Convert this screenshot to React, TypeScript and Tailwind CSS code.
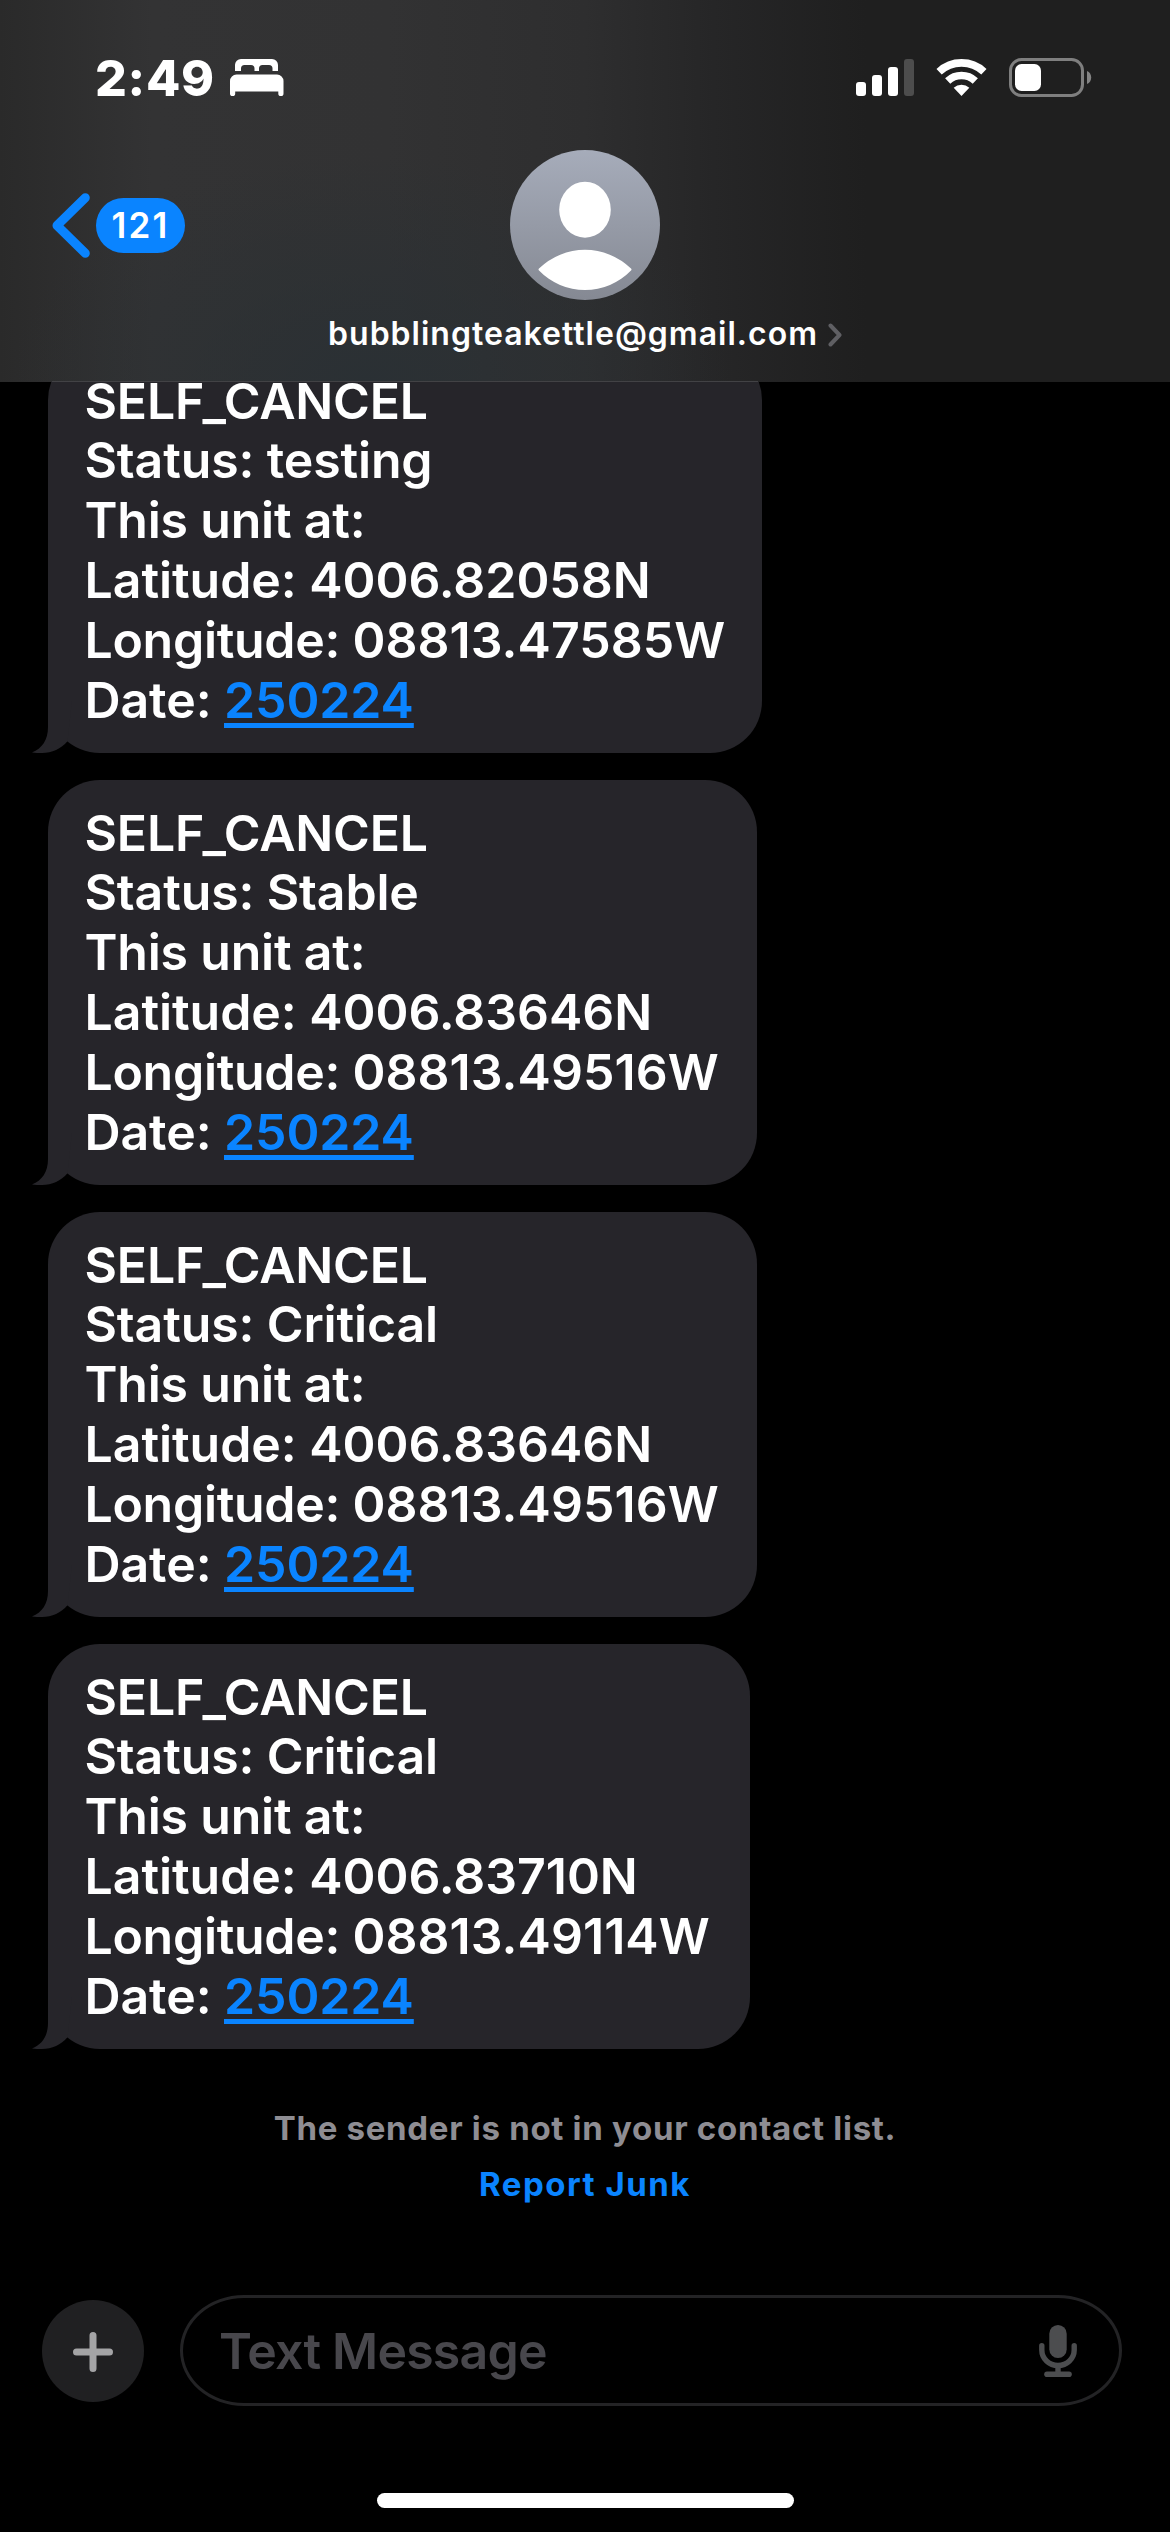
import clsx from 'clsx';

type Message = {
  id: number;
  status: string;
  latitude: string;
  longitude: string;
  date: string;
  width: string;
};

const messages: Message[] = [
  {
    id: 1,
    status: 'testing',
    latitude: '4006.82058N',
    longitude: '08813.47585W',
    date: '250224',
    width: 'w-[714px]',
  },
  {
    id: 2,
    status: 'Stable',
    latitude: '4006.83646N',
    longitude: '08813.49516W',
    date: '250224',
    width: 'w-[709px]',
  },
  {
    id: 3,
    status: 'Critical',
    latitude: '4006.83646N',
    longitude: '08813.49516W',
    date: '250224',
    width: 'w-[709px]',
  },
  {
    id: 4,
    status: 'Critical',
    latitude: '4006.83710N',
    longitude: '08813.49114W',
    date: '250224',
    width: 'w-[702px]',
  },
];

const BedIcon = () => (
  <svg width="54" height="38" viewBox="0 0 54 38" fill="currentColor">
    <path d="M5 12V6a6 6 0 0 1 6-6h31a6 6 0 0 1 6 6v6h-5.5V9.5A3.5 3.5 0 0 0 39 6h-6.5A3.5 3.5 0 0 0 29 9.5V12h-4.5V9.5A3.5 3.5 0 0 0 21 6h-6.5A3.5 3.5 0 0 0 11 9.5V12z" />
    <path d="M0 22a6.5 6.5 0 0 1 6.5-6.5h40.5a6.5 6.5 0 0 1 6.5 6.5V34.5a2.6 2.6 0 0 1-5.2 0V32.5H5.2V34.5a2.6 2.6 0 0 1-5.2 0z" />
  </svg>
);

const SignalIcon = () => (
  <svg width="58" height="37" viewBox="0 0 58 37" fill="currentColor">
    <rect x="0" y="23" width="10" height="14" rx="3" />
    <rect x="16" y="16" width="10" height="21" rx="3" />
    <rect x="32" y="8" width="10" height="29" rx="3" />
    <rect x="48" y="0" width="10" height="37" rx="3" fill="#4d4d4d" />
  </svg>
);

const WifiIcon = () => (
  <svg width="51" height="37" viewBox="0 0 51 37" fill="none">
    <path d="M3.1 12.7A32.85 32.85 0 0 1 47.9 12.7" stroke="currentColor" strokeWidth="7.7" />
    <path d="M11.7 21.9A20.2 20.2 0 0 1 39.3 21.9" stroke="currentColor" strokeWidth="7.6" />
    <path d="M25.5 37L17.7 28.8A11.4 11.4 0 0 1 33.3 28.8z" fill="currentColor" />
  </svg>
);

const BatteryIcon = () => (
  <svg width="83" height="39" viewBox="0 0 83 39" fill="none">
    <rect x="1.5" y="1.5" width="72" height="36" rx="11" stroke="#7f7f7f" strokeWidth="3" />
    <rect x="6" y="6" width="26" height="27" rx="6.5" fill="currentColor" />
    <path d="M78 13c2.7 1.2 4.2 3.6 4.2 6.5s-1.5 5.3-4.2 6.5z" fill="#848484" />
  </svg>
);

const Avatar = () => (
  <svg width="150" height="150" viewBox="0 0 150 150">
    <defs>
      <linearGradient id="avatar" x1="0" y1="0" x2="0" y2="1">
        <stop offset="0" stopColor="#a6acba" />
        <stop offset="1" stopColor="#858993" />
      </linearGradient>
    </defs>
    <circle cx="75" cy="75" r="75" fill="url(#avatar)" />
    <ellipse cx="75" cy="59.7" rx="25.8" ry="28" fill="#fff" />
    <path d="M29 118.5A66 66 0 0 1 121 118.5Q122 119.5 121 120.5A64 64 0 0 1 29 120.5Q28 119.5 29 118.5z" fill="#fff" />
  </svg>
);

const MicIcon = () => (
  <svg width="38" height="52" viewBox="0 0 38 52" fill="none" stroke="#4c4d4f" strokeLinecap="round">
    <rect x="10.3" y="0" width="17.4" height="33" rx="8.7" fill="#4c4d4f" stroke="none" />
    <path d="M2.8 20.7v4.3a16.2 15.5 0 0 0 32.4 0v-4.3" strokeWidth="5.4" />
    <path d="M19 41v7" strokeWidth="5.4" strokeLinecap="butt" />
    <path d="M8 49.2h22" strokeWidth="5.6" />
  </svg>
);

const StatusBar = () => (
  <div className="flex h-[150px] items-start justify-between pt-[57px] pr-[78px] pl-[95px]">
    <div className="flex h-[42px] items-center gap-[15px]">
      <span className="w-[120px] text-[50px] leading-[42px] font-extrabold tracking-[0.7px]">2:49</span>
      <BedIcon />
    </div>
    <div className="flex h-[41px] items-center gap-[22px]">
      <SignalIcon />
      <WifiIcon />
      <BatteryIcon />
    </div>
  </div>
);

const Header = () => (
  <header className="h-[382px] bg-[radial-gradient(ellipse_360px_230px_at_370px_385px,#2a3034_0%,#2a303400_100%),linear-gradient(90deg,#2a2a2a_0%,#333334_13%,#323233_33%,#2e2e2f_50%,#262627_61%,#1f1f1f_74%)]">
    <StatusBar />
    <div className="grid grid-cols-[1fr_150px_1fr] items-center">
      <button className="flex items-center gap-1.5 pl-[52px]">
        <svg width="38" height="65" viewBox="0 0 38 65" fill="none">
          <path d="M33.3 4.7L5 32.5l28.3 27.8" stroke="#0a84ff" strokeWidth="9" strokeLinecap="round" strokeLinejoin="round" />
        </svg>
        <span className="flex h-[55px] w-[89px] items-center justify-center rounded-full bg-[#0a84ff] text-[35px] font-semibold tracking-[2.2px]">
          121
        </span>
      </button>
      <Avatar />
    </div>
    <div className="mt-[14px] flex items-center justify-center gap-[10px]">
      <span className="text-[32px] leading-[40px] font-semibold tracking-[1px]">bubblingteakettle@gmail.com</span>
      <svg width="14" height="24" viewBox="0 0 14 24" fill="none" className="mt-[2px]">
        <path d="M2.5 2.5L11.5 12l-9 9.5" stroke="#5f5f63" strokeWidth="4" strokeLinecap="round" strokeLinejoin="round" />
      </svg>
    </div>
    <div className="mt-[27px] ml-[52px] h-px w-[706px] bg-[#424245]" />
  </header>
);

const Bubble = ({ message }: { message: Message }) => (
  <article
    className={clsx(
      'relative h-[405px] rounded-[52px] bg-[#26252a] pt-6 pl-[36.5px] text-[50px] leading-[60px] font-semibold whitespace-nowrap',
      message.width,
    )}
  >
    <svg width="52" height="52" viewBox="0 0 52 52" className="absolute bottom-0 -left-4" fill="#26252a">
      <path d="M16 0V26C16 39 10 47.5 0 51.5C3 52 7 52 10 52C20 52 29 48 35.5 40.3L40 0z" />
    </svg>
    <p className="leading-[58px] tracking-[-0.2px]">SELF_CANCEL</p>
    <p className="tracking-[-0.15px]">Status: {message.status}</p>
    <p className="tracking-[-0.2px]">This unit at:</p>
    <p className="tracking-[-0.05px]">Latitude: {message.latitude}</p>
    <p className="tracking-[-0.3px]">
      Longitude: <span className="tracking-[0.05px]">{message.longitude}</span>
    </p>
    <p className="tracking-[-0.1px]">
      Date:{' '}
      <a className="text-[#0a84ff] underline decoration-[5px] underline-offset-[5px] [text-decoration-skip-ink:none]">
        {message.date}
      </a>
    </p>
  </article>
);

const Composer = () => (
  <div className="mt-[91px] flex items-center gap-9 pl-[42px]">
    <button className="flex size-[102px] items-center justify-center rounded-full bg-[#202022]">
      <svg width="40" height="40" viewBox="0 0 40 40" stroke="#a4a4a6" strokeWidth="7" strokeLinecap="round" className="mt-[2px]">
        <path d="M20 3.5v33M3.5 20h33" />
      </svg>
    </button>
    <div className="flex h-[111px] w-[942px] items-center justify-between rounded-[64px/55.5px] border-3 border-[#232325] pr-[42px] pl-9">
      <span className="text-[50px] leading-[60px] font-semibold tracking-[-0.8px] text-[#48474c]">Text Message</span>
      <MicIcon />
    </div>
  </div>
);

const App = () => {
  return (
    <div className="h-[2532px] w-[1170px] overflow-hidden bg-black font-[Inter,'Liberation_Sans',sans-serif] text-white">
      <Header />
      {/* the first bubble is scrolled partly under the header */}
      <main className="h-[1667px] overflow-hidden">
        <div className="-mt-[34px] flex flex-col gap-[27px] pl-12">
          {messages.map((message) => (
            <Bubble key={message.id} message={message} />
          ))}
        </div>
      </main>
      <div className="mt-[59px] flex flex-col items-center gap-4 text-[33px] leading-[40px] font-bold">
        <p className="tracking-[0.7px] text-[#8e8d93]">The sender is not in your contact list.</p>
        <button className="tracking-[1.5px] text-[#0a84ff]">Report Junk</button>
      </div>
      <Composer />
      <div className="mx-auto mt-[87px] h-[15px] w-[417px] rounded-full bg-white" />
    </div>
  );
};

export default App;
